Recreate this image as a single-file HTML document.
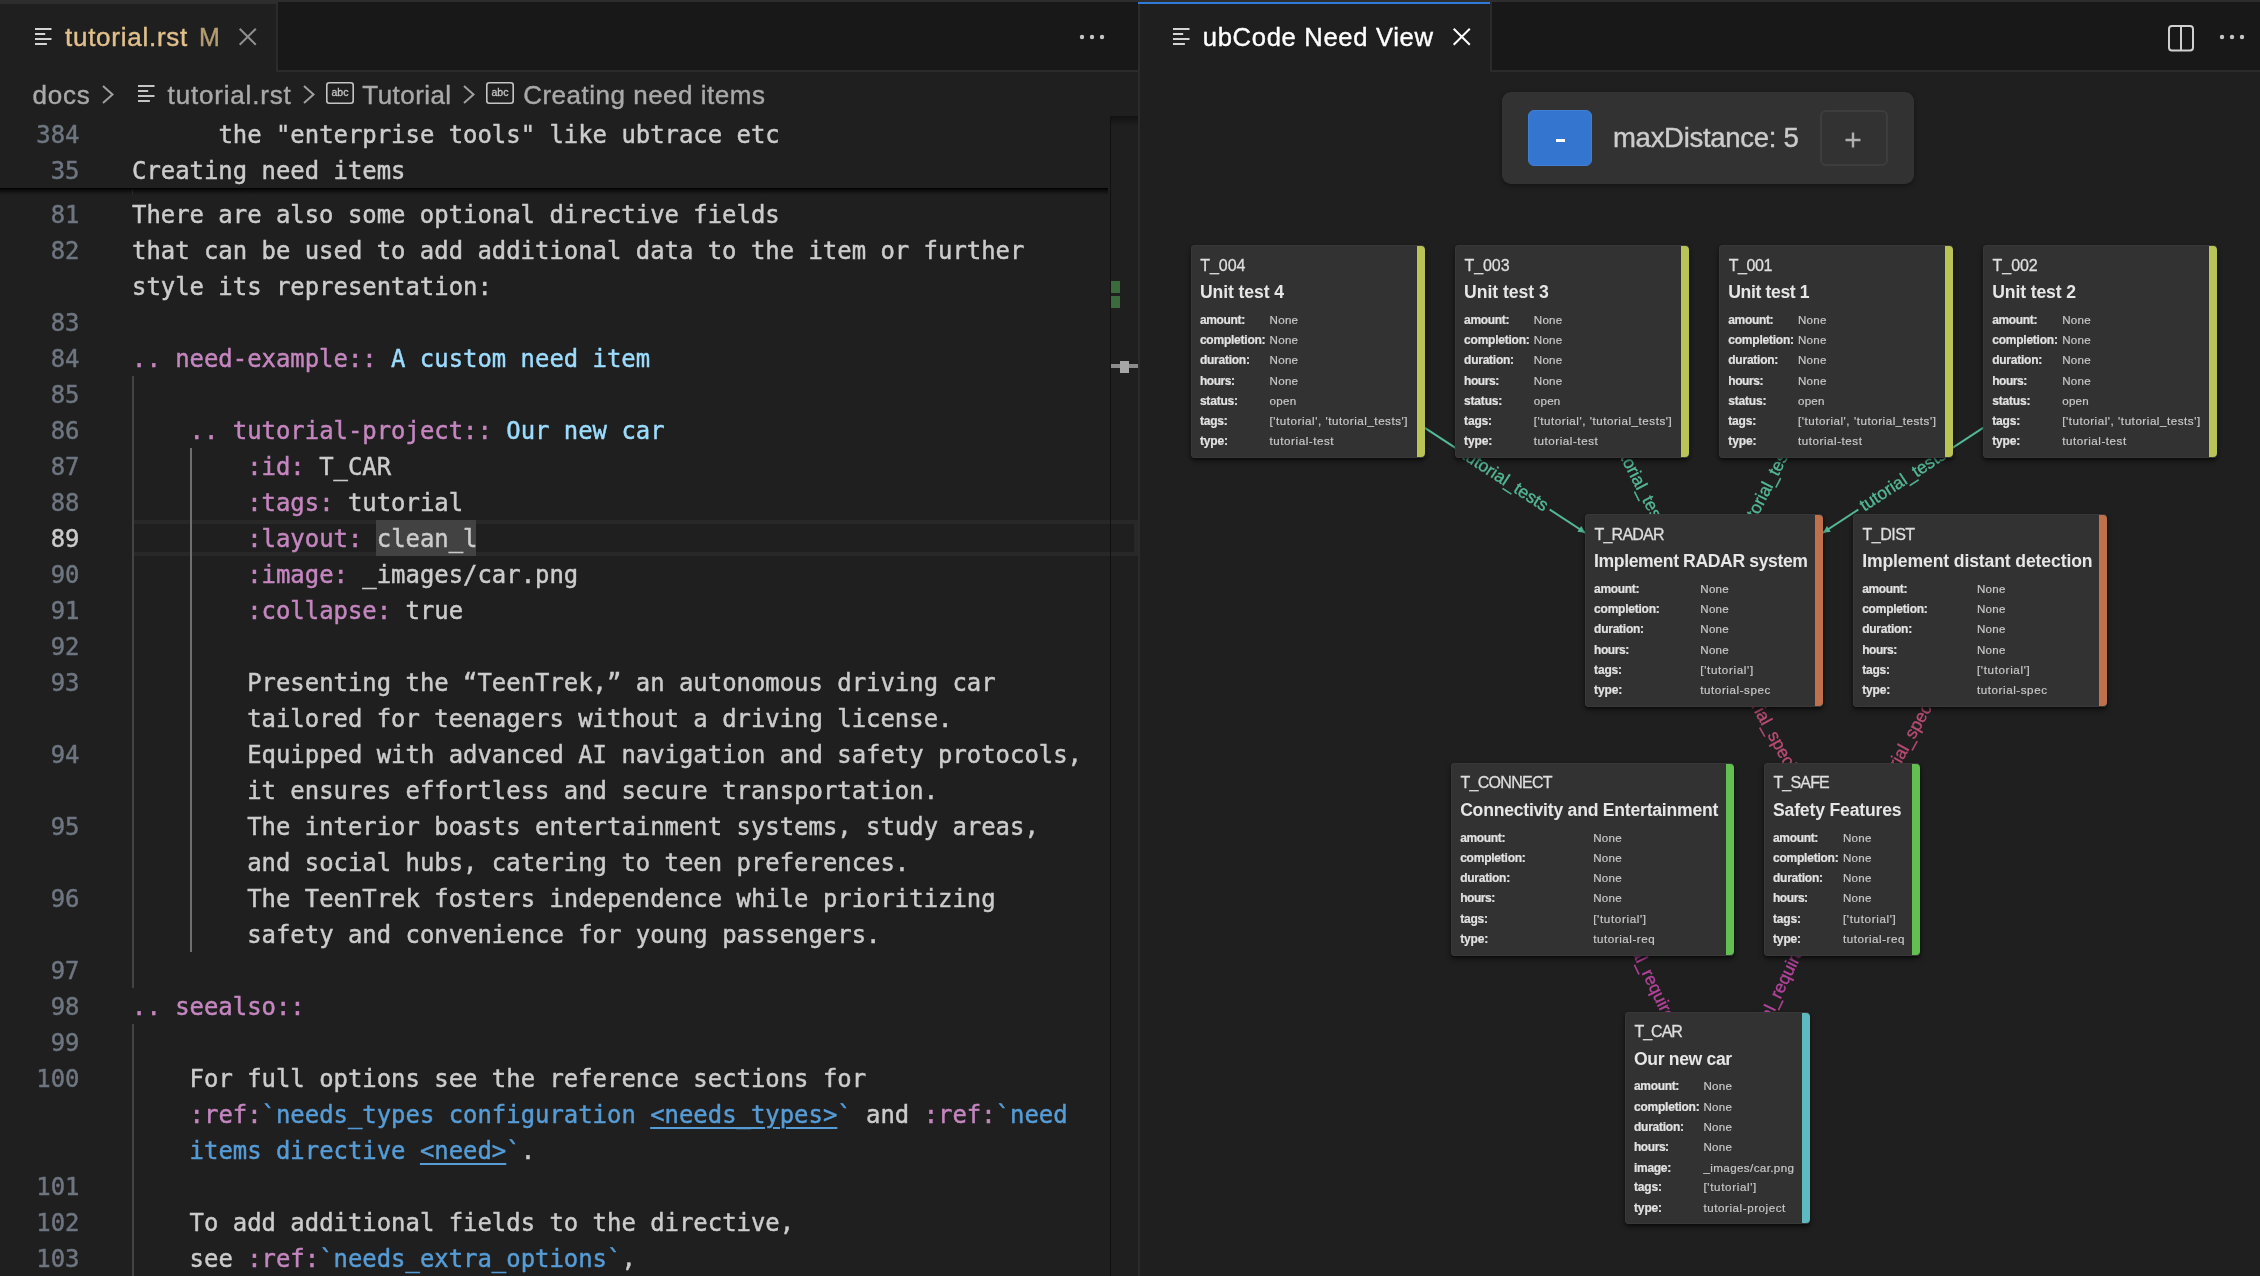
<!DOCTYPE html><html><head><meta charset="utf-8"><title>tutorial.rst</title><style>
*{box-sizing:border-box}
html,body{margin:0;padding:0;background:#1f1f1f;width:2260px;height:1276px;overflow:hidden}
body{position:relative;will-change:transform;font-family:'Liberation Sans', sans-serif;color:#ccc}
.t{position:absolute;white-space:pre;-webkit-text-stroke:0.4px}
.abs{position:absolute}
svg{position:absolute;overflow:visible}
#left{position:absolute;left:0;top:0;width:1138px;height:1276px;background:#1f1f1f;overflow:hidden}
#right{position:absolute;left:1140px;top:0;width:1120px;height:1276px;background:#1f1f1f;overflow:hidden}
#vsep{position:absolute;left:1138px;top:2px;width:2px;height:1274px;background:#2b2b2b}
#topstrip{position:absolute;left:0;top:0;width:2260px;height:2px;background:#2d2d2d}
.tabbar{position:absolute;left:0;top:2px;height:70px;background:#181818;border-bottom:2px solid #2b2b2b}
.tab{position:absolute;top:0;height:70px;background:#1f1f1f;border-right:2px solid #2b2b2b;border-top:2px solid #2d2d2d}
.ln{position:absolute;left:0;width:79.5px;text-align:right;font:23.92px "DejaVu Sans Mono", "Liberation Mono", monospace;line-height:36px;height:36px;white-space:pre;padding-top:1px;-webkit-text-stroke:0.45px}
.cl{position:absolute;font:23.92px "DejaVu Sans Mono", "Liberation Mono", monospace;line-height:36px;height:36px;white-space:pre;color:#ccc;padding-top:1px;-webkit-text-stroke:0.45px}
.sel{position:absolute;left:376px;top:520px;width:100px;height:36px;background:#424242}
.lnk{text-decoration:underline;text-underline-offset:4px;text-decoration-thickness:2px;color:#569cd6}
.guide{position:absolute;width:2px;background:#404040}
.curline{position:absolute;left:134px;top:520px;width:1004px;height:36px;border:4px solid #282828;border-left:0}
#sticky{position:absolute;left:0;top:116px;width:1108px;height:72px;background:#1f1f1f}
#stsh{position:absolute;left:0;top:188px;width:1108px;height:7px;background:linear-gradient(#000,rgba(0,0,0,.55) 35%,rgba(0,0,0,0))}

.node{position:absolute;background:#323232;border-radius:4px;box-shadow:0 3px 5px rgba(0,0,0,.5), 0 1px 2px rgba(0,0,0,.35), inset 0 0 0 1px #383838;overflow:hidden}
.bar{position:absolute;right:0;top:1px;bottom:1px;width:8px;border-radius:0 4px 4px 0}
.nid,.ntt,.nr{position:absolute;left:8.9px;white-space:pre}
.nid{font:16px 'Liberation Sans', sans-serif;line-height:20px;color:#dedede;left:9.3px;-webkit-text-stroke:0.3px}
.ntt{font:bold 17.6px 'Liberation Sans', sans-serif;line-height:24px;color:#e6e6e6}
.nr{font:11.6px 'Liberation Sans', sans-serif;line-height:20px;color:#c8c8c8;-webkit-text-stroke:0.2px}
.nr .k{display:inline-block;font:bold 12px 'Liberation Sans', sans-serif;line-height:20px;color:#e2e2e2}


#ruler{position:absolute;left:1110px;top:116px;width:28px;height:1160px;border-left:1.5px solid #111;background:linear-gradient(#121212,rgba(31,31,31,0) 10px)}
</style></head><body>
<div id="left">
<div class="curline"></div><div class="sel"></div>
<div class="guide" style="left:132.0px;top:376px;height:612px;background:#444"></div>
<div class="guide" style="left:190.0px;top:448px;height:504px;background:#6f6f6f"></div>
<div class="guide" style="left:132.0px;top:1024px;height:288px;background:#444"></div>
<div class="ln" style="top:196px;color:#6e7681">81</div><div class="cl" style="top:196px;left:132.0px">There are also some optional directive fields</div>
<div class="ln" style="top:232px;color:#6e7681">82</div><div class="cl" style="top:232px;left:132.0px">that can be used to add additional data to the item or further</div>
<div class="cl" style="top:268px;left:132.0px">style its representation:</div>
<div class="ln" style="top:304px;color:#6e7681">83</div>
<div class="ln" style="top:340px;color:#6e7681">84</div><div class="cl" style="top:340px;left:132.0px"><span style="color:#c586c0">.. need-example::</span><span style="color:#9cdcfe"> A custom need item</span></div>
<div class="ln" style="top:376px;color:#6e7681">85</div>
<div class="ln" style="top:412px;color:#6e7681">86</div><div class="cl" style="top:412px;left:189.6px"><span style="color:#c586c0">.. tutorial-project::</span><span style="color:#9cdcfe"> Our new car</span></div>
<div class="ln" style="top:448px;color:#6e7681">87</div><div class="cl" style="top:448px;left:247.2px"><span style="color:#c586c0">:id:</span> T_CAR</div>
<div class="ln" style="top:484px;color:#6e7681">88</div><div class="cl" style="top:484px;left:247.2px"><span style="color:#c586c0">:tags:</span> tutorial</div>
<div class="ln" style="top:520px;color:#cccccc">89</div><div class="cl" style="top:520px;left:247.2px"><span style="color:#c586c0">:layout:</span> clean_l</div>
<div class="ln" style="top:556px;color:#6e7681">90</div><div class="cl" style="top:556px;left:247.2px"><span style="color:#c586c0">:image:</span> _images/car.png</div>
<div class="ln" style="top:592px;color:#6e7681">91</div><div class="cl" style="top:592px;left:247.2px"><span style="color:#c586c0">:collapse:</span> true</div>
<div class="ln" style="top:628px;color:#6e7681">92</div>
<div class="ln" style="top:664px;color:#6e7681">93</div><div class="cl" style="top:664px;left:247.2px">Presenting the “TeenTrek,” an autonomous driving car</div>
<div class="cl" style="top:700px;left:247.2px">tailored for teenagers without a driving license.</div>
<div class="ln" style="top:736px;color:#6e7681">94</div><div class="cl" style="top:736px;left:247.2px">Equipped with advanced AI navigation and safety protocols,</div>
<div class="cl" style="top:772px;left:247.2px">it ensures effortless and secure transportation.</div>
<div class="ln" style="top:808px;color:#6e7681">95</div><div class="cl" style="top:808px;left:247.2px">The interior boasts entertainment systems, study areas,</div>
<div class="cl" style="top:844px;left:247.2px">and social hubs, catering to teen preferences.</div>
<div class="ln" style="top:880px;color:#6e7681">96</div><div class="cl" style="top:880px;left:247.2px">The TeenTrek fosters independence while prioritizing</div>
<div class="cl" style="top:916px;left:247.2px">safety and convenience for young passengers.</div>
<div class="ln" style="top:952px;color:#6e7681">97</div>
<div class="ln" style="top:988px;color:#6e7681">98</div><div class="cl" style="top:988px;left:132.0px"><span style="color:#c586c0">.. seealso::</span></div>
<div class="ln" style="top:1024px;color:#6e7681">99</div>
<div class="ln" style="top:1060px;color:#6e7681">100</div><div class="cl" style="top:1060px;left:189.6px">For full options see the reference sections for</div>
<div class="cl" style="top:1096px;left:189.6px"><span style="color:#c586c0">:ref:</span><span style="color:#569cd6">`needs_types configuration </span><span class="lnk">&lt;needs_types&gt;</span><span style="color:#569cd6">`</span> and <span style="color:#c586c0">:ref:</span><span style="color:#569cd6">`need</span></div>
<div class="cl" style="top:1132px;left:189.6px"><span style="color:#569cd6">items directive </span><span class="lnk">&lt;need&gt;</span><span style="color:#569cd6">`</span>.</div>
<div class="ln" style="top:1168px;color:#6e7681">101</div>
<div class="ln" style="top:1204px;color:#6e7681">102</div><div class="cl" style="top:1204px;left:189.6px">To add additional fields to the directive,</div>
<div class="ln" style="top:1240px;color:#6e7681">103</div><div class="cl" style="top:1240px;left:189.6px">see <span style="color:#c586c0">:ref:</span><span style="color:#569cd6">`needs_extra_options`</span>,</div>
<div id="ruler"></div>
<div class="abs" style="left:1111px;top:281px;width:9px;height:12px;background:#3b6b3c"></div>
<div class="abs" style="left:1111px;top:296px;width:9px;height:12px;background:#3b6b3c"></div>
<div class="abs" style="left:1111px;top:364px;width:27px;height:4px;background:#8c8c8c"></div>
<div class="abs" style="left:1120px;top:361px;width:9px;height:12px;background:#a6a6a6"></div>
<div class="abs" style="left:132px;top:189px;width:1px;height:5px;background:#3c3c3c"></div>
<div id="stsh"></div>
<div id="sticky">
<div class="ln" style="top:0;color:#6e7681">384</div><div class="cl" style="top:0;left:218.4px">the "enterprise tools" like ubtrace etc</div>
<div class="ln" style="top:36px;color:#6e7681">35</div><div class="cl" style="top:36px;left:132px">Creating need items</div>
</div>
<div class="tabbar" style="width:1138px"><div class="tab" style="left:0;width:278px"></div></div>
<svg style="left:35px;top:28px" width="16.5" height="18" viewBox="0 0 16.5 18"><rect x="0" y="0" width="16.5" height="2" fill="#d4d4d4"/><rect x="0" y="5" width="10.2" height="2" fill="#d4d4d4"/><rect x="0" y="10" width="16.5" height="2" fill="#d4d4d4"/><rect x="0" y="15" width="11.9" height="2" fill="#d4d4d4"/></svg>
<div class="t" style="left:65.00px;top:21.89px;font:normal 26px 'Liberation Sans', sans-serif;line-height:31.2px;color:#e2c08d;letter-spacing:0.737px;">tutorial.rst</div>
<div class="t" style="left:199.00px;top:22.24px;font:normal 25px 'Liberation Sans', sans-serif;line-height:30.0px;color:#b59c72;letter-spacing:-2.828px;">M</div>
<svg style="left:239px;top:28px" width="17.5" height="17.5" viewBox="0 0 17.5 17.5"><path d="M0.7 0.7 L16.8 16.8 M16.8 0.7 L0.7 16.8" stroke="#8f8f8f" stroke-width="2" fill="none"/></svg>
<svg style="left:1079px;top:34px" width="26" height="6" viewBox="0 0 26 6"><circle cx="3" cy="3" r="2.2" fill="#c5c5c5"/><circle cx="13" cy="3" r="2.2" fill="#c5c5c5"/><circle cx="23" cy="3" r="2.2" fill="#c5c5c5"/></svg>
<div class="t" style="left:32.50px;top:79.59px;font:normal 26px 'Liberation Sans', sans-serif;line-height:31.2px;color:#a9a9a9;letter-spacing:0.770px;">docs</div>
<svg style="left:102px;top:85px" width="12" height="19" viewBox="0 0 12 19"><path d="M1 1 L10.5 9.5 L1 18" stroke="#a0a0a0" stroke-width="2" fill="none"/></svg>
<svg style="left:138px;top:85px" width="16.5" height="18" viewBox="0 0 16.5 18"><rect x="0" y="0" width="16.5" height="2" fill="#c5c5c5"/><rect x="0" y="5" width="10.2" height="2" fill="#c5c5c5"/><rect x="0" y="10" width="16.5" height="2" fill="#c5c5c5"/><rect x="0" y="15" width="11.9" height="2" fill="#c5c5c5"/></svg>
<div class="t" style="left:167.60px;top:79.59px;font:normal 26px 'Liberation Sans', sans-serif;line-height:31.2px;color:#a9a9a9;letter-spacing:0.820px;">tutorial.rst</div>
<svg style="left:303px;top:85px" width="12" height="19" viewBox="0 0 12 19"><path d="M1 1 L10.5 9.5 L1 18" stroke="#a0a0a0" stroke-width="2" fill="none"/></svg>
<svg style="left:325.5px;top:82px" width="28" height="22" viewBox="0 0 28 22"><rect x="0.8" y="0.8" width="26.4" height="20.4" rx="2.5" ry="2.5" stroke="#c5c5c5" stroke-width="1.6" fill="none"/><text x="14" y="13.6" text-anchor="middle" font-family="'Liberation Sans', sans-serif" font-size="10.5" fill="#c5c5c5" stroke="#c5c5c5" stroke-width="0.3">abc</text></svg>
<div class="t" style="left:362.30px;top:79.59px;font:normal 26px 'Liberation Sans', sans-serif;line-height:31.2px;color:#a9a9a9;letter-spacing:0.446px;">Tutorial</div>
<svg style="left:463px;top:85px" width="12" height="19" viewBox="0 0 12 19"><path d="M1 1 L10.5 9.5 L1 18" stroke="#a0a0a0" stroke-width="2" fill="none"/></svg>
<svg style="left:486px;top:82px" width="28" height="22" viewBox="0 0 28 22"><rect x="0.8" y="0.8" width="26.4" height="20.4" rx="2.5" ry="2.5" stroke="#c5c5c5" stroke-width="1.6" fill="none"/><text x="14" y="13.6" text-anchor="middle" font-family="'Liberation Sans', sans-serif" font-size="10.5" fill="#c5c5c5" stroke="#c5c5c5" stroke-width="0.3">abc</text></svg>
<div class="t" style="left:523.20px;top:79.59px;font:normal 26px 'Liberation Sans', sans-serif;line-height:31.2px;color:#a9a9a9;letter-spacing:0.501px;">Creating need items</div>
</div>
<div id="right"></div>
<div class="tabbar" style="left:1140px;width:1120px"><div class="tab" style="left:0;width:352px"></div></div>
<div id="topstrip"></div>
<div id="vsep"></div>
<div class="abs" style="left:1138px;top:2px;width:352px;height:2px;background:#2f7ad6"></div>
<svg style="left:1173px;top:28px" width="16.5" height="18" viewBox="0 0 16.5 18"><rect x="0" y="0" width="16.5" height="2" fill="#d4d4d4"/><rect x="0" y="5" width="10.2" height="2" fill="#d4d4d4"/><rect x="0" y="10" width="16.5" height="2" fill="#d4d4d4"/><rect x="0" y="15" width="11.9" height="2" fill="#d4d4d4"/></svg>
<div class="t" style="left:1202.80px;top:22.27px;font:normal 25.6px 'Liberation Sans', sans-serif;line-height:30.72px;color:#ffffff;letter-spacing:0.670px;">ubCode Need View</div>
<svg style="left:1453px;top:28px" width="17.5" height="17.5" viewBox="0 0 17.5 17.5"><path d="M0.7 0.7 L16.8 16.8 M16.8 0.7 L0.7 16.8" stroke="#ffffff" stroke-width="2" fill="none"/></svg>
<svg style="left:2168px;top:24.8px" width="26" height="26.4" viewBox="0 0 26 26.4"><rect x="1" y="1" width="24" height="24.4" rx="3" ry="3" stroke="#d0d0d0" stroke-width="2" fill="none"/><path d="M13 1 V25.4" stroke="#d0d0d0" stroke-width="2"/></svg>
<svg style="left:2219px;top:34px" width="26" height="6" viewBox="0 0 26 6"><circle cx="3" cy="3" r="2.2" fill="#c5c5c5"/><circle cx="13" cy="3" r="2.2" fill="#c5c5c5"/><circle cx="23" cy="3" r="2.2" fill="#c5c5c5"/></svg>
<div class="abs" style="left:1502px;top:92px;width:412px;height:92px;background:#323232;border-radius:9px;box-shadow:0 2px 5px rgba(0,0,0,.35)"></div>
<div class="abs" style="left:1528px;top:110px;width:64px;height:56px;background:#3476cf;border:1px solid #3f80d6;border-radius:6px"></div>
<div class="abs" style="left:1555.5px;top:138.5px;width:9.5px;height:3px;background:#fff"></div>
<div class="t" style="left:1613.00px;top:120.97px;font:normal 27.5px 'Liberation Sans', sans-serif;line-height:33.0px;color:#cccccc;letter-spacing:-0.288px;">maxDistance: 5</div>
<div class="abs" style="left:1820px;top:110px;width:68px;height:56px;border:2px solid #3d3d3d;border-radius:6px"></div>
<svg style="left:1845px;top:132px" width="16" height="16" viewBox="0 0 16 16"><path d="M8 0.5V15.5M0.5 8H15.5" stroke="#b0b0b0" stroke-width="2.4"/></svg>
<svg id="edges" style="left:1140px;top:72px" width="1120" height="1204" viewBox="1140 72 1120 1204">
<line x1="1307.8" y1="351.3" x2="1704.1" y2="610.5" stroke="#54b895" stroke-width="2"/>
<g transform="translate(1504.8 480.2) rotate(33.18)"><rect x="-53.6" y="-10" width="107.2" height="20" fill="#1f1f1f"/><text x="0" y="5.2" text-anchor="middle" font-family="'Liberation Sans', sans-serif" font-size="17.5" letter-spacing="0.000" fill="#54b895" stroke="#54b895" stroke-width="0.35">tutorial_tests</text></g>
<path transform="translate(1585.2 532.7) rotate(33.18)" d="M0 0 L-7 -3.5 L-7 3.5 Z" fill="#54b895"/>
<line x1="1572.0" y1="351.3" x2="1704.1" y2="610.5" stroke="#54b895" stroke-width="2"/>
<g transform="translate(1640.6 485.9) rotate(62.99)"><rect x="-53.6" y="-10" width="107.2" height="20" fill="#1f1f1f"/><text x="0" y="5.2" text-anchor="middle" font-family="'Liberation Sans', sans-serif" font-size="17.5" letter-spacing="0.000" fill="#54b895" stroke="#54b895" stroke-width="0.35">tutorial_tests</text></g>
<line x1="1836.2" y1="351.3" x2="1704.1" y2="610.5" stroke="#54b895" stroke-width="2"/>
<g transform="translate(1767.6 485.9) rotate(-63.00)"><rect x="-53.6" y="-10" width="107.2" height="20" fill="#1f1f1f"/><text x="0" y="5.2" text-anchor="middle" font-family="'Liberation Sans', sans-serif" font-size="17.5" letter-spacing="0.000" fill="#54b895" stroke="#54b895" stroke-width="0.35">tutorial_tests</text></g>
<line x1="2100.1" y1="351.3" x2="1704.1" y2="610.5" stroke="#54b895" stroke-width="2"/>
<g transform="translate(1903.2 480.2) rotate(-33.21)"><rect x="-53.6" y="-10" width="107.2" height="20" fill="#1f1f1f"/><text x="0" y="5.2" text-anchor="middle" font-family="'Liberation Sans', sans-serif" font-size="17.5" letter-spacing="0.000" fill="#54b895" stroke="#54b895" stroke-width="0.35">tutorial_tests</text></g>
<path transform="translate(1823.0 532.7) rotate(146.79)" d="M0 0 L-7 -3.5 L-7 3.5 Z" fill="#54b895"/>
<line x1="1704.1" y1="610.5" x2="1842.2" y2="859.6" stroke="#b84c74" stroke-width="2"/>
<g transform="translate(1773.1 735.0) rotate(61.00)"><rect x="-69.2" y="-10" width="138.4" height="20" fill="#1f1f1f"/><text x="0" y="5.2" text-anchor="middle" font-family="'Liberation Sans', sans-serif" font-size="17.5" letter-spacing="0.000" fill="#b84c74" stroke="#b84c74" stroke-width="0.35">tutorial_specifies</text></g>
<line x1="1980.1" y1="610.5" x2="1842.2" y2="859.6" stroke="#b84c74" stroke-width="2"/>
<g transform="translate(1911.2 735.0) rotate(-61.03)"><rect x="-69.2" y="-10" width="138.4" height="20" fill="#1f1f1f"/><text x="0" y="5.2" text-anchor="middle" font-family="'Liberation Sans', sans-serif" font-size="17.5" letter-spacing="0.000" fill="#b84c74" stroke="#b84c74" stroke-width="0.35">tutorial_specifies</text></g>
<line x1="1592.7" y1="859.6" x2="1717.5" y2="1118.1" stroke="#b3449b" stroke-width="2"/>
<g transform="translate(1652.8 984.0) rotate(64.21)"><rect x="-81.3" y="-10" width="162.7" height="20" fill="#1f1f1f"/><text x="0" y="5.2" text-anchor="middle" font-family="'Liberation Sans', sans-serif" font-size="17.5" letter-spacing="0.000" fill="#b3449b" stroke="#b3449b" stroke-width="0.35">tutorial_required_by</text></g>
<line x1="1842.2" y1="859.6" x2="1717.5" y2="1118.1" stroke="#b3449b" stroke-width="2"/>
<g transform="translate(1782.2 984.0) rotate(-64.26)"><rect x="-81.3" y="-10" width="162.7" height="20" fill="#1f1f1f"/><text x="0" y="5.2" text-anchor="middle" font-family="'Liberation Sans', sans-serif" font-size="17.5" letter-spacing="0.000" fill="#b3449b" stroke="#b3449b" stroke-width="0.35">tutorial_required_by</text></g>
</svg>
<div class="node" style="left:1191.0px;top:245px;width:233.5px;height:212.6px">
<div class="bar" style="background:#bac355"></div>
<div class="nid" style="top:11.00px;letter-spacing:-0.075px">T_004</div>
<div class="ntt" style="top:35.00px;letter-spacing:-0.097px">Unit test 4</div>
<div class="nr" style="top:65.00px"><span class="k" style="width:69.7px;letter-spacing:-0.333px">amount:</span><span class="v" style="letter-spacing:0.245px">None</span></div>
<div class="nr" style="top:85.00px"><span class="k" style="width:69.7px;letter-spacing:-0.227px">completion:</span><span class="v" style="letter-spacing:0.245px">None</span></div>
<div class="nr" style="top:105.00px"><span class="k" style="width:69.7px;letter-spacing:-0.244px">duration:</span><span class="v" style="letter-spacing:0.245px">None</span></div>
<div class="nr" style="top:126.00px"><span class="k" style="width:69.7px;letter-spacing:-0.441px">hours:</span><span class="v" style="letter-spacing:0.245px">None</span></div>
<div class="nr" style="top:146.00px"><span class="k" style="width:69.7px;letter-spacing:-0.192px">status:</span><span class="v" style="letter-spacing:0.251px">open</span></div>
<div class="nr" style="top:166.00px"><span class="k" style="width:69.7px;letter-spacing:-0.174px">tags:</span><span class="v" style="letter-spacing:0.541px">['tutorial', 'tutorial_tests']</span></div>
<div class="nr" style="top:186.00px"><span class="k" style="width:69.7px;letter-spacing:-0.134px">type:</span><span class="v" style="letter-spacing:0.549px">tutorial-test</span></div>
</div>
<div class="node" style="left:1455.2px;top:245px;width:233.5px;height:212.6px">
<div class="bar" style="background:#bac355"></div>
<div class="nid" style="top:11.00px;letter-spacing:-0.075px">T_003</div>
<div class="ntt" style="top:35.00px;letter-spacing:-0.033px">Unit test 3</div>
<div class="nr" style="top:65.00px"><span class="k" style="width:69.7px;letter-spacing:-0.333px">amount:</span><span class="v" style="letter-spacing:0.245px">None</span></div>
<div class="nr" style="top:85.00px"><span class="k" style="width:69.7px;letter-spacing:-0.227px">completion:</span><span class="v" style="letter-spacing:0.245px">None</span></div>
<div class="nr" style="top:105.00px"><span class="k" style="width:69.7px;letter-spacing:-0.244px">duration:</span><span class="v" style="letter-spacing:0.245px">None</span></div>
<div class="nr" style="top:126.00px"><span class="k" style="width:69.7px;letter-spacing:-0.441px">hours:</span><span class="v" style="letter-spacing:0.245px">None</span></div>
<div class="nr" style="top:146.00px"><span class="k" style="width:69.7px;letter-spacing:-0.192px">status:</span><span class="v" style="letter-spacing:0.251px">open</span></div>
<div class="nr" style="top:166.00px"><span class="k" style="width:69.7px;letter-spacing:-0.174px">tags:</span><span class="v" style="letter-spacing:0.541px">['tutorial', 'tutorial_tests']</span></div>
<div class="nr" style="top:186.00px"><span class="k" style="width:69.7px;letter-spacing:-0.134px">type:</span><span class="v" style="letter-spacing:0.549px">tutorial-test</span></div>
</div>
<div class="node" style="left:1719.4px;top:245px;width:233.5px;height:212.6px">
<div class="bar" style="background:#bac355"></div>
<div class="nid" style="top:11.00px;letter-spacing:-0.395px">T_001</div>
<div class="ntt" style="top:35.00px;letter-spacing:-0.369px">Unit test 1</div>
<div class="nr" style="top:65.00px"><span class="k" style="width:69.7px;letter-spacing:-0.333px">amount:</span><span class="v" style="letter-spacing:0.245px">None</span></div>
<div class="nr" style="top:85.00px"><span class="k" style="width:69.7px;letter-spacing:-0.227px">completion:</span><span class="v" style="letter-spacing:0.245px">None</span></div>
<div class="nr" style="top:105.00px"><span class="k" style="width:69.7px;letter-spacing:-0.244px">duration:</span><span class="v" style="letter-spacing:0.245px">None</span></div>
<div class="nr" style="top:126.00px"><span class="k" style="width:69.7px;letter-spacing:-0.441px">hours:</span><span class="v" style="letter-spacing:0.245px">None</span></div>
<div class="nr" style="top:146.00px"><span class="k" style="width:69.7px;letter-spacing:-0.192px">status:</span><span class="v" style="letter-spacing:0.251px">open</span></div>
<div class="nr" style="top:166.00px"><span class="k" style="width:69.7px;letter-spacing:-0.174px">tags:</span><span class="v" style="letter-spacing:0.541px">['tutorial', 'tutorial_tests']</span></div>
<div class="nr" style="top:186.00px"><span class="k" style="width:69.7px;letter-spacing:-0.134px">type:</span><span class="v" style="letter-spacing:0.549px">tutorial-test</span></div>
</div>
<div class="node" style="left:1983.3px;top:245px;width:233.5px;height:212.6px">
<div class="bar" style="background:#bac355"></div>
<div class="nid" style="top:11.00px;letter-spacing:-0.055px">T_002</div>
<div class="ntt" style="top:35.00px;letter-spacing:-0.124px">Unit test 2</div>
<div class="nr" style="top:65.00px"><span class="k" style="width:70.0px;letter-spacing:-0.333px">amount:</span><span class="v" style="letter-spacing:0.245px">None</span></div>
<div class="nr" style="top:85.00px"><span class="k" style="width:70.0px;letter-spacing:-0.227px">completion:</span><span class="v" style="letter-spacing:0.245px">None</span></div>
<div class="nr" style="top:105.00px"><span class="k" style="width:70.0px;letter-spacing:-0.244px">duration:</span><span class="v" style="letter-spacing:0.245px">None</span></div>
<div class="nr" style="top:126.00px"><span class="k" style="width:70.0px;letter-spacing:-0.441px">hours:</span><span class="v" style="letter-spacing:0.245px">None</span></div>
<div class="nr" style="top:146.00px"><span class="k" style="width:70.0px;letter-spacing:-0.192px">status:</span><span class="v" style="letter-spacing:0.251px">open</span></div>
<div class="nr" style="top:166.00px"><span class="k" style="width:70.0px;letter-spacing:-0.174px">tags:</span><span class="v" style="letter-spacing:0.541px">['tutorial', 'tutorial_tests']</span></div>
<div class="nr" style="top:186.00px"><span class="k" style="width:70.0px;letter-spacing:-0.134px">type:</span><span class="v" style="letter-spacing:0.549px">tutorial-test</span></div>
</div>
<div class="node" style="left:1585.2px;top:514.25px;width:237.8px;height:192.5px">
<div class="bar" style="background:#c0714b"></div>
<div class="nid" style="top:10.75px;letter-spacing:-0.770px">T_RADAR</div>
<div class="ntt" style="top:34.75px;letter-spacing:-0.384px">Implement RADAR system</div>
<div class="nr" style="top:64.75px"><span class="k" style="width:106.2px;letter-spacing:-0.333px">amount:</span><span class="v" style="letter-spacing:0.245px">None</span></div>
<div class="nr" style="top:84.75px"><span class="k" style="width:106.2px;letter-spacing:-0.227px">completion:</span><span class="v" style="letter-spacing:0.245px">None</span></div>
<div class="nr" style="top:104.75px"><span class="k" style="width:106.2px;letter-spacing:-0.244px">duration:</span><span class="v" style="letter-spacing:0.245px">None</span></div>
<div class="nr" style="top:125.75px"><span class="k" style="width:106.2px;letter-spacing:-0.441px">hours:</span><span class="v" style="letter-spacing:0.245px">None</span></div>
<div class="nr" style="top:145.75px"><span class="k" style="width:106.2px;letter-spacing:-0.174px">tags:</span><span class="v" style="letter-spacing:0.652px">['tutorial']</span></div>
<div class="nr" style="top:165.75px"><span class="k" style="width:106.2px;letter-spacing:-0.134px">type:</span><span class="v" style="letter-spacing:0.573px">tutorial-spec</span></div>
</div>
<div class="node" style="left:1853.25px;top:514.25px;width:253.75px;height:192.5px">
<div class="bar" style="background:#c0714b"></div>
<div class="nid" style="top:10.75px;letter-spacing:-0.504px">T_DIST</div>
<div class="ntt" style="top:34.75px;letter-spacing:-0.124px">Implement distant detection</div>
<div class="nr" style="top:64.75px"><span class="k" style="width:114.8px;letter-spacing:-0.333px">amount:</span><span class="v" style="letter-spacing:0.245px">None</span></div>
<div class="nr" style="top:84.75px"><span class="k" style="width:114.8px;letter-spacing:-0.227px">completion:</span><span class="v" style="letter-spacing:0.245px">None</span></div>
<div class="nr" style="top:104.75px"><span class="k" style="width:114.8px;letter-spacing:-0.244px">duration:</span><span class="v" style="letter-spacing:0.245px">None</span></div>
<div class="nr" style="top:125.75px"><span class="k" style="width:114.8px;letter-spacing:-0.441px">hours:</span><span class="v" style="letter-spacing:0.245px">None</span></div>
<div class="nr" style="top:145.75px"><span class="k" style="width:114.8px;letter-spacing:-0.174px">tags:</span><span class="v" style="letter-spacing:0.652px">['tutorial']</span></div>
<div class="nr" style="top:165.75px"><span class="k" style="width:114.8px;letter-spacing:-0.134px">type:</span><span class="v" style="letter-spacing:0.573px">tutorial-spec</span></div>
</div>
<div class="node" style="left:1451.25px;top:763.25px;width:282.85px;height:192.75px">
<div class="bar" style="background:#62c050"></div>
<div class="nid" style="top:9.75px;letter-spacing:-0.720px">T_CONNECT</div>
<div class="ntt" style="top:34.75px;letter-spacing:-0.231px">Connectivity and Entertainment</div>
<div class="nr" style="top:64.75px"><span class="k" style="width:133.1px;letter-spacing:-0.333px">amount:</span><span class="v" style="letter-spacing:0.245px">None</span></div>
<div class="nr" style="top:84.75px"><span class="k" style="width:133.1px;letter-spacing:-0.227px">completion:</span><span class="v" style="letter-spacing:0.245px">None</span></div>
<div class="nr" style="top:104.75px"><span class="k" style="width:133.1px;letter-spacing:-0.244px">duration:</span><span class="v" style="letter-spacing:0.245px">None</span></div>
<div class="nr" style="top:124.75px"><span class="k" style="width:133.1px;letter-spacing:-0.441px">hours:</span><span class="v" style="letter-spacing:0.245px">None</span></div>
<div class="nr" style="top:145.75px"><span class="k" style="width:133.1px;letter-spacing:-0.174px">tags:</span><span class="v" style="letter-spacing:0.652px">['tutorial']</span></div>
<div class="nr" style="top:165.75px"><span class="k" style="width:133.1px;letter-spacing:-0.134px">type:</span><span class="v" style="letter-spacing:0.548px">tutorial-req</span></div>
</div>
<div class="node" style="left:1764.1px;top:763.25px;width:156.15px;height:192.75px">
<div class="bar" style="background:#62c050"></div>
<div class="nid" style="top:9.75px;letter-spacing:-0.811px">T_SAFE</div>
<div class="ntt" style="top:34.75px;letter-spacing:-0.170px">Safety Features</div>
<div class="nr" style="top:64.75px"><span class="k" style="width:70.0px;letter-spacing:-0.333px">amount:</span><span class="v" style="letter-spacing:0.245px">None</span></div>
<div class="nr" style="top:84.75px"><span class="k" style="width:70.0px;letter-spacing:-0.227px">completion:</span><span class="v" style="letter-spacing:0.245px">None</span></div>
<div class="nr" style="top:104.75px"><span class="k" style="width:70.0px;letter-spacing:-0.244px">duration:</span><span class="v" style="letter-spacing:0.245px">None</span></div>
<div class="nr" style="top:124.75px"><span class="k" style="width:70.0px;letter-spacing:-0.441px">hours:</span><span class="v" style="letter-spacing:0.245px">None</span></div>
<div class="nr" style="top:145.75px"><span class="k" style="width:70.0px;letter-spacing:-0.174px">tags:</span><span class="v" style="letter-spacing:0.652px">['tutorial']</span></div>
<div class="nr" style="top:165.75px"><span class="k" style="width:70.0px;letter-spacing:-0.134px">type:</span><span class="v" style="letter-spacing:0.548px">tutorial-req</span></div>
</div>
<div class="node" style="left:1625.1px;top:1012.1px;width:184.9px;height:212px">
<div class="bar" style="background:#5fb9c1"></div>
<div class="nid" style="top:9.90px;letter-spacing:-0.991px">T_CAR</div>
<div class="ntt" style="top:34.90px;letter-spacing:-0.346px">Our new car</div>
<div class="nr" style="top:63.90px"><span class="k" style="width:69.5px;letter-spacing:-0.333px">amount:</span><span class="v" style="letter-spacing:0.245px">None</span></div>
<div class="nr" style="top:84.90px"><span class="k" style="width:69.5px;letter-spacing:-0.227px">completion:</span><span class="v" style="letter-spacing:0.245px">None</span></div>
<div class="nr" style="top:104.90px"><span class="k" style="width:69.5px;letter-spacing:-0.244px">duration:</span><span class="v" style="letter-spacing:0.245px">None</span></div>
<div class="nr" style="top:124.90px"><span class="k" style="width:69.5px;letter-spacing:-0.441px">hours:</span><span class="v" style="letter-spacing:0.245px">None</span></div>
<div class="nr" style="top:145.90px"><span class="k" style="width:69.5px;letter-spacing:-0.298px">image:</span><span class="v" style="letter-spacing:0.388px">_images/car.png</span></div>
<div class="nr" style="top:164.90px"><span class="k" style="width:69.5px;letter-spacing:-0.174px">tags:</span><span class="v" style="letter-spacing:0.652px">['tutorial']</span></div>
<div class="nr" style="top:185.90px"><span class="k" style="width:69.5px;letter-spacing:-0.134px">type:</span><span class="v" style="letter-spacing:0.558px">tutorial-project</span></div>
</div>
</body></html>
